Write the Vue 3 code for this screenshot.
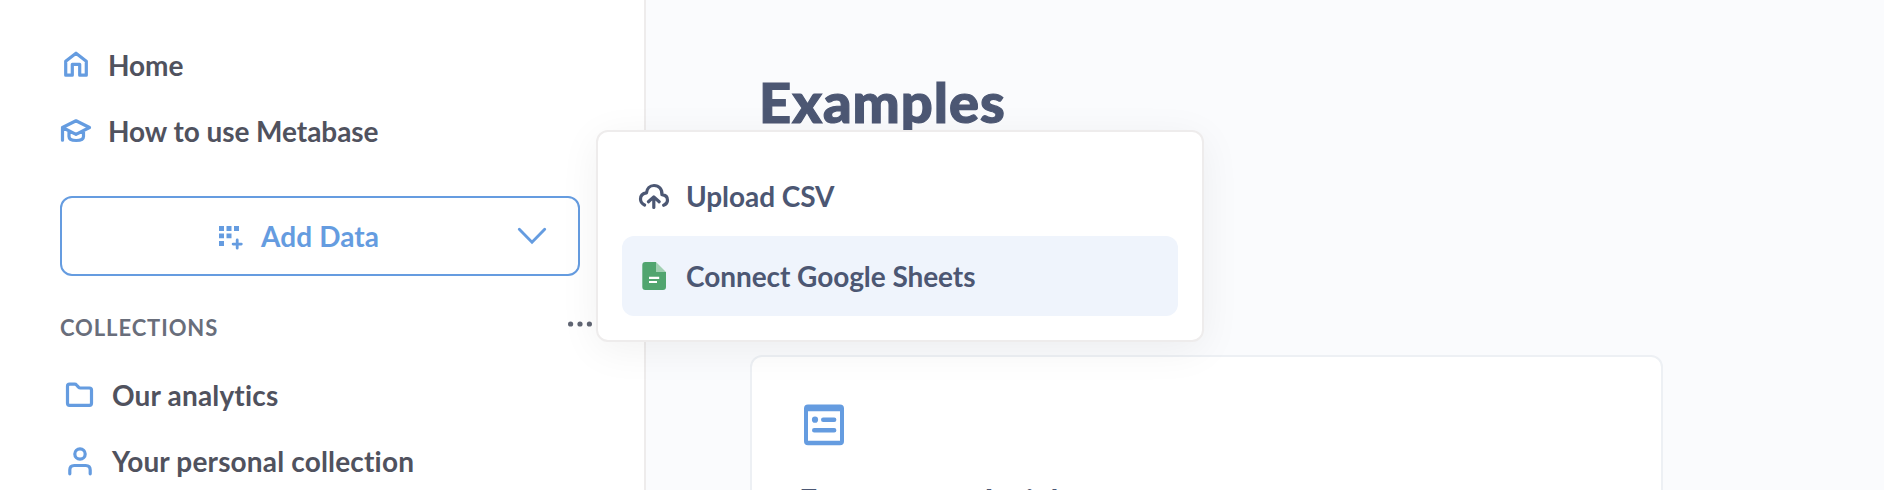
<script setup>
const mainLinks = [
  { label: 'Home', icon: 'home' },
  { label: 'How to use Metabase', icon: 'learn' },
]
const collections = [
  { label: 'Our analytics', icon: 'folder' },
  { label: 'Your personal collection', icon: 'person' },
]
</script>

<template>
  <div class="page">
    <aside class="sidebar">
      <nav class="links">
        <a v-for="item in mainLinks" :key="item.label" class="link">
          <svg v-if="item.icon === 'home'" class="icon line" viewBox="0 0 32 32">
            <path d="M5.700 26.200V12.200L16 4.200l10.300 8v14h-6.600V15.300h-7.400v10.900z" />
          </svg>
          <svg v-else class="icon line" viewBox="0 0 32 32">
            <path d="M2.500 25.200V12.500L16 5.800l13.500 6.700L16 19.400 2.500 12.500M9 16v5.500c0 2.400 2.800 4 7.200 4s7.300-1.600 7.300-4V16" />
          </svg>
          <span>{{ item.label }}</span>
        </a>
      </nav>

      <button class="add">
        <svg class="grid-icon" viewBox="0 0 24 24">
          <path d="M0 0h5v5H0zM7.500 0h5v5h-5zM15 0h5v5h-5zM0 7.600h5v4.600H0zM7.500 7.600h5v4.600h-5zM0 15h5v5H0z" />
          <path class="plus" d="M18.200 14v8.200M14.100 18.100h8.200" />
        </svg>
        <span>Add Data</span>
        <svg class="chevron" viewBox="0 0 28 16"><path d="M1.300 1.300L14 14.200 26.700 1.300" /></svg>
      </button>

      <header class="heading">
        <span>COLLECTIONS</span>
        <svg class="dots" viewBox="0 0 24 6">
          <circle cx="2.600" cy="3" r="2.600" /><circle cx="12" cy="3" r="2.600" /><circle cx="21.400" cy="3" r="2.600" />
        </svg>
      </header>

      <nav class="links nested">
        <a v-for="item in collections" :key="item.label" class="link">
          <svg v-if="item.icon === 'folder'" class="icon line" viewBox="0 0 32 32">
            <path d="M5.500 5.200h5.200c.8 0 1.300.2 1.800.8l2 2.200c.6.600 1 .8 1.800.8h9.200c1.200 0 2 .8 2 2v13.300c0 1.200-.8 2-2 2h-20c-1.200 0-2-.8-2-2V7.200c0-1.200.8-2 2-2z" />
          </svg>
          <svg v-else class="icon line" viewBox="0 0 32 32">
            <circle cx="16" cy="9" r="5.200" />
            <path d="M5.800 28.800v-3.800c0-3 1.500-4.500 4.500-4.500h11.400c3 0 4.500 1.500 4.500 4.500v3.800" />
          </svg>
          <span>{{ item.label }}</span>
        </a>
      </nav>
    </aside>

    <main class="content">
      <h1>Examples</h1>
      <section class="card">
        <svg class="card-icon" viewBox="0 0 42 42">
          <path fill-rule="evenodd" d="M5 .5h32a4 4 0 0 1 4 4v32.700a4 4 0 0 1-4 4H5a4 4 0 0 1-4-4V4.500a4 4 0 0 1 4-4zM5 7.200v29.500h32V7.200z" />
          <circle cx="12" cy="15.700" r="3.100" />
          <path class="rows" d="M20.200 15.700h11M11.200 26.200h20" />
        </svg>
        <h2>E-commerce Insights</h2>
      </section>
    </main>

    <div class="menu">
      <div class="option">
        <svg class="icon line" viewBox="0 0 32 32">
          <path d="M6.600 25C4 23.800 2.500 21.700 2.500 19c0-3.300 2.400-5.700 6-6.200.5-4.200 3.200-7.300 7.500-7.300 5 0 8.400 3.800 7.900 9.200 3.300.3 5.600 2.400 5.600 5.500 0 2.500-1.400 4.200-3.900 5.100M15.800 27.500V17.200M10.400 21.700l5.400-4.800 5.400 4.800" />
        </svg>
        <span>Upload CSV</span>
      </div>
      <div class="option selected">
        <svg class="icon" viewBox="0 0 32 32">
          <path fill="#51a56f" d="M7.300 2H18v10h10v15a3 3 0 0 1-3 3H7.300a3 3 0 0 1-3-3V5a3 3 0 0 1 3-3z" />
          <path fill="#a1d0b2" d="M18 2l10 10H18z" />
          <path fill="#fff" d="M11 16.800h10.200V19H11zM11 21h8v2h-8z" />
        </svg>
        <span>Connect Google Sheets</span>
      </div>
    </div>
  </div>
</template>

<style>
body {
  margin: 0;
  overflow: hidden;
}
</style>

<style scoped>
.page {
  position: relative;
  display: flex;
  width: 1884px;
  height: 490px;
  overflow: hidden;
  background: #fafbfd;
  font-family: Lato, "Liberation Sans", sans-serif;
  font-size: 28px;
  font-weight: 700;
  line-height: 34px;
  letter-spacing: -0.06px;
  font-variant-ligatures: none;
}
svg {
  display: block;
  flex: none;
  overflow: visible;
}
.sidebar {
  box-sizing: border-box;
  width: 646px;
  height: 490px;
  flex: none;
  padding: 32px 0 0 60px;
  background: #fff;
  border-right: 2px solid #eeecec;
  color: #50525e;
}
.link {
  display: flex;
  align-items: center;
  gap: 16px;
  height: 66px;
}
.nested {
  padding-left: 4px;
  letter-spacing: 0.17px;
}
.icon {
  width: 32px;
  height: 32px;
}
.line {
  fill: none;
  stroke: #659ce0;
  stroke-width: 3.200;
  stroke-linecap: round;
  stroke-linejoin: round;
}
.add {
  box-sizing: border-box;
  display: flex;
  align-items: center;
  width: 520px;
  height: 80px;
  margin: 32px 0 0;
  padding: 0 32px 0 157px;
  border: 2px solid #659ce0;
  border-radius: 12px;
  background: #fff;
  color: #659ce0;
  font: inherit;
  letter-spacing: 0.1px;
}
.grid-icon {
  width: 24px;
  height: 24px;
  margin: 4px 18px 0 0;
  fill: #659ce0;
}
.plus {
  stroke: #659ce0;
  stroke-width: 2.800;
  stroke-linecap: round;
}
.chevron {
  width: 28px;
  height: 16px;
  margin-left: auto;
  fill: none;
  stroke: #659ce0;
  stroke-width: 2.900;
  stroke-linecap: round;
}
.heading {
  display: flex;
  align-items: center;
  justify-content: space-between;
  height: 34px;
  margin-top: 35px;
  padding-right: 52px;
  padding-bottom: 17px;
  color: #696e7b;
  font-size: 22px;
  letter-spacing: 0.9px;
}
.dots {
  width: 24px;
  height: 6px;
  margin-bottom: 8px;
  fill: #606573;
}
.content {
  flex: 1;
  padding: 68px 0 0 104px;
  color: #4c5773;
}
h1 {
  margin: 0 0 0 9px;
  font-size: 56px;
  font-weight: 900;
  line-height: 68px;
  letter-spacing: 1px;
  -webkit-text-stroke: 1.200px #4c5773;
}
.card {
  box-sizing: border-box;
  width: 913px;
  height: 320px;
  margin-top: 219px;
  padding: 47px 50px;
  border: 2px solid #edf0f4;
  border-radius: 12px;
  background: #fff;
}
.card-icon {
  width: 42px;
  height: 42px;
  margin-left: 1px;
  fill: #659ce0;
}
.rows {
  stroke: #659ce0;
  stroke-width: 4.400;
  stroke-linecap: round;
}
h2 {
  margin: 35px 0 0 -3px;
  font-size: 32px;
  line-height: 39px;
}
.menu {
  position: absolute;
  top: 130px;
  left: 596px;
  box-sizing: border-box;
  width: 608px;
  height: 212px;
  padding: 24px;
  border: 2px solid #eeecec;
  border-radius: 12px;
  background: #fff;
  box-shadow: 0 8px 40px rgba(0, 0, 0, 0.06);
  color: #4c5773;
}
.option {
  display: flex;
  align-items: center;
  gap: 16px;
  height: 80px;
  padding-left: 16px;
  border-radius: 12px;
}
.option .line {
  stroke: #4c5773;
}
.selected {
  background: #eff4fc;
}
</style>
